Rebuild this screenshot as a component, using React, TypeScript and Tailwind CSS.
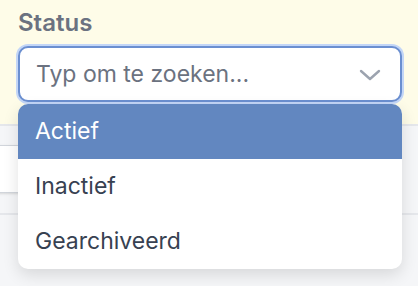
const options = ['Actief', 'Inactief', 'Gearchiveerd'];

const App: React.FC = () => {
  return (
    <div className="relative h-[286px] w-[418px] overflow-hidden bg-[#f5f6f8] font-['Inter',sans-serif]">
      <section className="h-[126px] border-b-2 border-[#e5e7eb] bg-[#fefce8] px-[18px] pt-[7px]">
        <label className="block text-[24px] font-semibold leading-[31px] text-[#6b7280]">
          Status
        </label>
        <div className="mt-[8px] flex h-[56px] w-[384px] items-center justify-between rounded-[10px] border-2 border-[#6b8fd0] bg-white pl-[16px] pr-[19px] shadow-[0_0_0_2px_#c3d6f7]">
          <span className="text-[23px] text-[#6b7280]">Typ om te zoeken...</span>
          <svg width="22" height="14" viewBox="0 0 22 14" fill="none" className="mt-[2px]">
            <polyline
              points="2,3 11,11 20,3"
              stroke="#9ca3af"
              strokeWidth="2.4"
              strokeLinecap="round"
              strokeLinejoin="round"
            />
          </svg>
        </div>
      </section>

      <div className="mt-[19px] flex h-[48px] w-[60px] -translate-x-[30px] rounded-[10px] border border-[#d1d5db] bg-white shadow-sm" />
      <div className="mt-[20px] border-t-2 border-[#e5e7eb]" />

      <ul className="absolute left-[18px] top-[104px] w-[384px] overflow-hidden rounded-[10px] bg-white shadow-[0_6px_16px_rgba(0,0,0,0.12)]">
        {options.map((option, index) => (
          <li
            key={option}
            className={
              index === 0
                ? 'flex h-[55px] items-center bg-[#6287c0] px-[17px] text-[23px] text-white'
                : 'flex h-[55px] items-center px-[17px] text-[23px] text-[#374151]'
            }
          >
            {option}
          </li>
        ))}
      </ul>
    </div>
  );
};

export default App;
